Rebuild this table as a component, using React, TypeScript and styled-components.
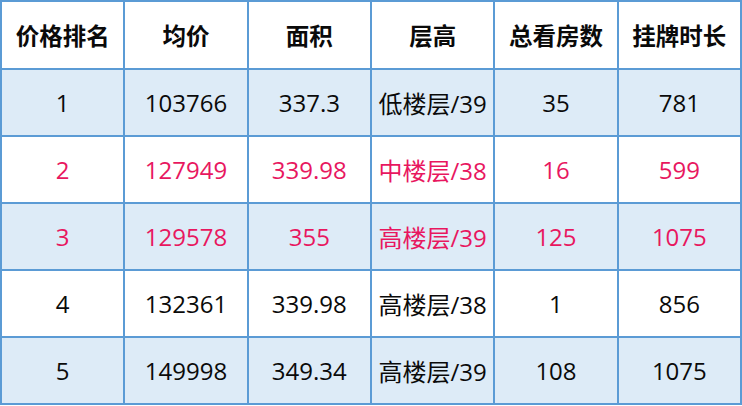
import styled, { createGlobalStyle } from 'styled-components';

const GlobalStyle = createGlobalStyle`
  html, body {
    margin: 0;
    padding: 0;
    background: #ffffff;
  }
`;

type RowProps = {
  readonly $striped: boolean;
  readonly $hot: boolean;
};

const Table = styled.table`
  width: 742px;
  border-collapse: collapse;
  table-layout: fixed;
  font-family: "Open Sans", "Noto Sans CJK SC", sans-serif;
  font-size: 24px;
  color: #0a0a0a;
`;

const HeadCell = styled.th`
  height: 66px;
  padding: 0;
  border: 2px solid #5b9bd5;
  background: #ffffff;
  font-family: "Noto Sans CJK SC", sans-serif;
  font-weight: 700;
  font-size: 23.5px;
  text-align: center;
  vertical-align: middle;
`;

const Row = styled.tr<RowProps>`
  background: ${({ $striped }) => ($striped ? '#ddebf7' : '#ffffff')};
  color: ${({ $hot }) => ($hot ? '#e8175f' : '#0a0a0a')};
`;

const Cell = styled.td`
  height: 65px;
  padding: 0;
  border: 2px solid #5b9bd5;
  text-align: center;
  vertical-align: middle;
  white-space: nowrap;
`;

const headers = ['价格排名', '均价', '面积', '层高', '总看房数', '挂牌时长'];

const rows = [
  ['1', '103766', '337.3', '低楼层/39', '35', '781'],
  ['2', '127949', '339.98', '中楼层/38', '16', '599'],
  ['3', '129578', '355', '高楼层/39', '125', '1075'],
  ['4', '132361', '339.98', '高楼层/38', '1', '856'],
  ['5', '149998', '349.34', '高楼层/39', '108', '1075'],
];

const hotRows = ['2', '3'];

const App = () => (
  <>
    <GlobalStyle />
    <Table>
      <thead>
        <tr>
          {headers.map((h) => (
            <HeadCell key={h}>{h}</HeadCell>
          ))}
        </tr>
      </thead>
      <tbody>
        {rows.map((r, i) => (
          <Row key={r[0]} $striped={i % 2 === 0} $hot={hotRows.includes(r[0])}>
            {r.map((c, j) => (
              <Cell key={j}>{c}</Cell>
            ))}
          </Row>
        ))}
      </tbody>
    </Table>
  </>
);

export default App;
